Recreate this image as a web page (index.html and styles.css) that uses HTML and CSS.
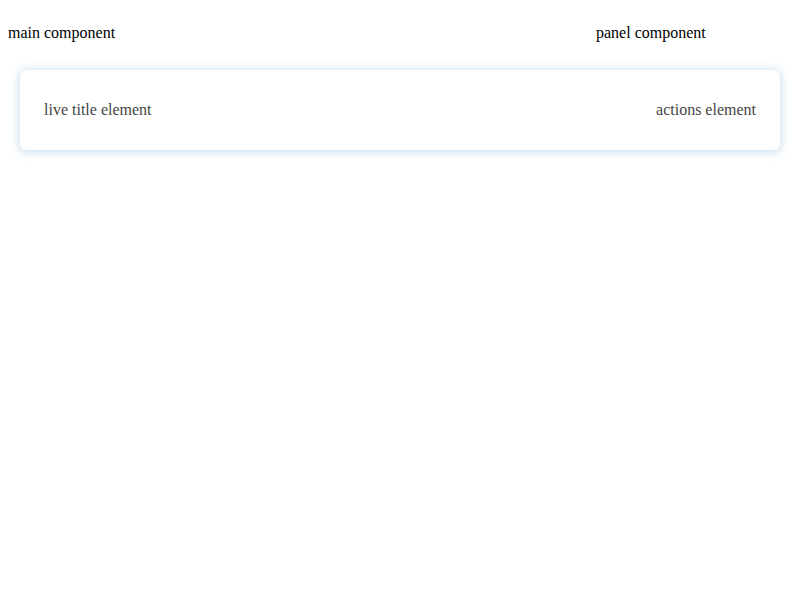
FILE: index.html
```html
<!DOCTYPE html>
<html>
<head>
<meta charset="utf-8">
<link rel="stylesheet" href="styles.css">
</head>
<body>
<div class="top">
  <p class="main">main component</p>
  <p class="panel">panel component</p>
</div>
<div class="card">
  <span class="title">live title element</span>
  <span class="actions">actions element</span>
</div>
</body>
</html>
```

FILE: styles.css
```css
body {
  margin: 8px;
  font-family: "Liberation Serif", serif;
  font-size: 16px;
  color: #000;
  background: #fff;
}
.top {
  display: flex;
  justify-content: space-between;
}
.top p {
  margin: 16px 0;
}
.panel {
  width: 196px;
}
.card {
  margin: 12px;
  height: 80px;
  padding: 0 24px;
  box-sizing: border-box;
  display: flex;
  align-items: center;
  justify-content: space-between;
  background: #fff;
  border-radius: 6px;
  box-shadow: 0 1px 10px 1px rgba(110, 170, 220, 0.4);
  color: #444;
}
```
